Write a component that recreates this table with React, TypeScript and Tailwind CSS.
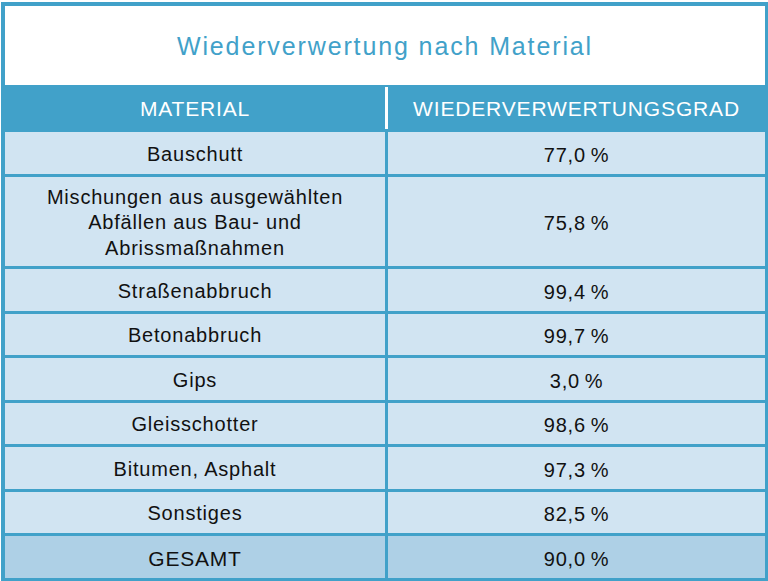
import React from "react";

const rows: { m: React.ReactNode; v: string; h: string }[] = [
  { m: "Bauschutt", v: "77,0\u2009%", h: "h-[42px]" },
  {
    m: (
      <>
        Mischungen aus ausgewählten
        <br />
        Abfällen aus Bau- und
        <br />
        Abrissmaßnahmen
      </>
    ),
    v: "75,8\u2009%",
    h: "h-[89px]",
  },
  { m: "Straßenabbruch", v: "99,4\u2009%", h: "h-[42px]" },
  { m: "Betonabbruch", v: "99,7\u2009%", h: "h-[41px]" },
  { m: "Gips", v: "3,0\u2009%", h: "h-[42px]" },
  { m: "Gleisschotter", v: "98,6\u2009%", h: "h-[41px]" },
  { m: "Bitumen, Asphalt", v: "97,3\u2009%", h: "h-[42px]" },
  { m: "Sonstiges", v: "82,5\u2009%", h: "h-[41px]" },
];

export default function App() {
  return (
    <div
      className="w-[768px] h-[581px] bg-white pt-[2px] pl-[1px] overflow-hidden"
      style={{ fontFamily: "'Liberation Sans', Arial, sans-serif" }}
    >
      <div className="w-[767px] border-l-4 border-t-4 border-r-[3px] border-b-[3px] border-[#41a1c9] bg-[#41a1c9]">
        <div className="h-[79px] bg-white flex items-center justify-center pt-[2px]">
          <span className="text-[25px] tracking-[0.075em] text-[#41a1c9] leading-none">
            Wiederverwertung nach Material
          </span>
        </div>
        <div className="h-[47px] grid grid-cols-[380px_3px_377px] text-white text-[21px] tracking-[0.04em]">
          <div className="flex items-center justify-center">MATERIAL</div>
          <div className="mt-[2px] h-[42px] bg-white" />
          <div className="flex items-center justify-center">WIEDERVERWERTUNGSGRAD</div>
        </div>
        <div className="grid grid-cols-[380px_377px] gap-x-[3px] gap-y-[3px] text-[20px] tracking-[0.04em] text-[#111]">
          {rows.map((r, i) => (
            <React.Fragment key={i}>
              <div
                className={`${r.h} bg-[#d1e4f2] flex items-center justify-center text-center leading-[25.5px] pt-[3px]`}
              >
                <div>{r.m}</div>
              </div>
              <div className={`${r.h} bg-[#d1e4f2] flex items-center justify-center pt-[3px]`}>
                {r.v}
              </div>
            </React.Fragment>
          ))}
          <div className="h-[42px] bg-[#aed0e6] flex items-center justify-center text-[21px] pt-[3px]">
            GESAMT
          </div>
          <div className="h-[42px] bg-[#aed0e6] flex items-center justify-center pt-[3px]">
            90,0{"\u2009"}%
          </div>
        </div>
      </div>
    </div>
  );
}
